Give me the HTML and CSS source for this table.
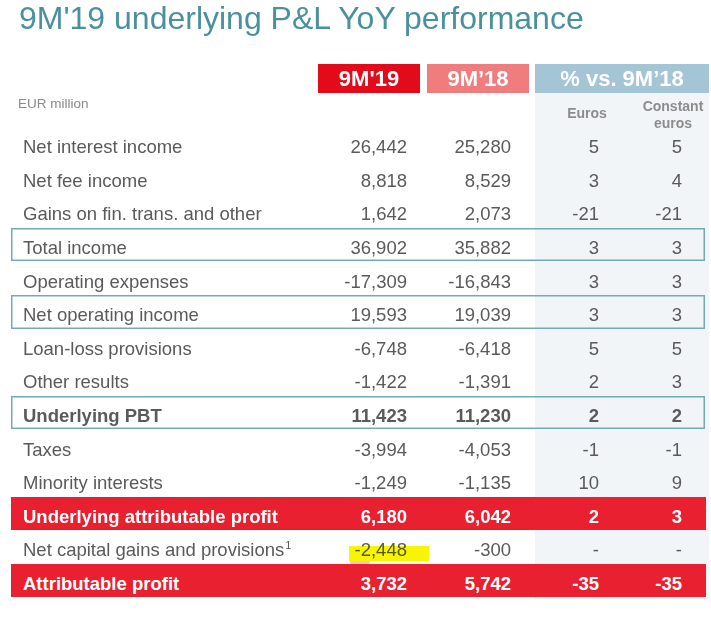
FILE: index.html
```html
<!DOCTYPE html>
<html lang="en">
<head>
<meta charset="utf-8">
<title>9M'19 underlying P&amp;L YoY performance</title>
<link rel="stylesheet" href="styles.css">
</head>
<body>
<div class="page">
  <h1 class="title">9M'19 underlying P&amp;L YoY performance</h1>
  <div class="table">
    <div class="head">
      <div class="hbox h19">9M'19</div>
      <div class="hbox h18">9M’18</div>
      <div class="hbox hpct">% vs. 9M’18</div>
    </div>
    <div class="body">
      <div class="sub">
        <div class="unit">EUR million</div>
        <div class="colh c3h">Euros</div>
        <div class="colh c4h">Constant<br>euros</div>
      </div>
      <div class="row"><div class="lbl">Net interest income</div><div class="n1">26,442</div><div class="n2">25,280</div><div class="n3">5</div><div class="n4">5</div></div>
      <div class="row"><div class="lbl">Net fee income</div><div class="n1">8,818</div><div class="n2">8,529</div><div class="n3">3</div><div class="n4">4</div></div>
      <div class="row"><div class="lbl">Gains on fin. trans. and other</div><div class="n1">1,642</div><div class="n2">2,073</div><div class="n3">-21</div><div class="n4">-21</div></div>
      <div class="row boxed"><div class="lbl">Total income</div><div class="n1">36,902</div><div class="n2">35,882</div><div class="n3">3</div><div class="n4">3</div></div>
      <div class="row"><div class="lbl">Operating expenses</div><div class="n1">-17,309</div><div class="n2">-16,843</div><div class="n3">3</div><div class="n4">3</div></div>
      <div class="row boxed"><div class="lbl">Net operating income</div><div class="n1">19,593</div><div class="n2">19,039</div><div class="n3">3</div><div class="n4">3</div></div>
      <div class="row"><div class="lbl">Loan-loss provisions</div><div class="n1">-6,748</div><div class="n2">-6,418</div><div class="n3">5</div><div class="n4">5</div></div>
      <div class="row"><div class="lbl">Other results</div><div class="n1">-1,422</div><div class="n2">-1,391</div><div class="n3">2</div><div class="n4">3</div></div>
      <div class="row boxed strong"><div class="lbl">Underlying PBT</div><div class="n1">11,423</div><div class="n2">11,230</div><div class="n3">2</div><div class="n4">2</div></div>
      <div class="row"><div class="lbl">Taxes</div><div class="n1">-3,994</div><div class="n2">-4,053</div><div class="n3">-1</div><div class="n4">-1</div></div>
      <div class="row"><div class="lbl">Minority interests</div><div class="n1">-1,249</div><div class="n2">-1,135</div><div class="n3">10</div><div class="n4">9</div></div>
      <div class="row red"><div class="lbl">Underlying attributable profit</div><div class="n1">6,180</div><div class="n2">6,042</div><div class="n3">2</div><div class="n4">3</div></div>
      <div class="row"><div class="lbl">Net capital gains and provisions<sup class="fn">1</sup></div><div class="n1">-2,448</div><div class="n2">-300</div><div class="n3">-</div><div class="n4">-</div><span class="hl"></span><span class="smudge"></span></div>
      <div class="row red"><div class="lbl">Attributable profit</div><div class="n1">3,732</div><div class="n2">5,742</div><div class="n3">-35</div><div class="n4">-35</div></div>
    </div>
  </div>
</div>
</body>
</html>
```

FILE: styles.css
```css
html, body {
  margin: 0;
  padding: 0;
  background: #ffffff;
}

.page {
  width: 711px;
  height: 617px;
  overflow: hidden;
  font-family: "Liberation Sans", Arial, sans-serif;
  color: #5a5a5a;
}

.title {
  margin: 0;
  padding-left: 19px;
  font-size: 32px;
  line-height: 36px;
  font-weight: normal;
  color: #4a919e;
  white-space: nowrap;
}

.table {
  margin-left: 11px;
  margin-top: 28px;
  width: 698px;
}

.head,
.sub,
.row {
  display: grid;
  grid-template-columns: 307px 102px 109px 88px 1fr;
}

.head {
  height: 29px;
}

.hbox {
  height: 29px;
  line-height: 29px;
  font-size: 22px;
  font-weight: bold;
  color: #ffffff;
  text-align: center;
  white-space: nowrap;
}

.h19 {
  grid-column: 2;
  background: #e30a1a;
}

.h18 {
  grid-column: 3;
  margin-left: 7px;
  background: #f07c7d;
}

.hpct {
  grid-column: 4 / span 2;
  margin-left: 6px;
  background: #a3c5d5;
}

.body {
  background: linear-gradient(90deg, transparent 524px, #f1f5f8 524px);
  padding-bottom: 2px;
}

.sub {
  height: 34px;
}

.unit {
  grid-column: 1;
  padding-left: 7px;
  padding-top: 3px;
  font-size: 13.5px;
  line-height: 16px;
  color: #8a8a8a;
}

.colh {
  font-size: 14px;
  font-weight: bold;
  line-height: 16.5px;
  color: #8c8c8c;
  text-align: center;
  white-space: nowrap;
}

.c3h {
  grid-column: 4;
  padding-left: 28px;
  padding-top: 12px;
}

.c4h {
  grid-column: 5;
  padding-left: 20px;
  padding-top: 5px;
}

.row {
  position: relative;
  height: 33.6px;
  box-sizing: border-box;
  padding-top: 7px;
  align-items: center;
  font-size: 18.5px;
  line-height: 20px;
  white-space: nowrap;
}

.lbl {
  grid-column: 1;
  padding-left: 12px;
}

.n1, .n2, .n3, .n4 {
  text-align: right;
  justify-self: start;
}

.n1 { grid-column: 2; width: 89px; }
.n2 { grid-column: 3; width: 91px; }
.n3 { grid-column: 4; width: 70px; }
.n4 { grid-column: 5; width: 65px; }

.boxed {
  margin-right: 4px;
  box-shadow: inset 0 0 0 1.5px #74a9b6;
}

.strong {
  font-weight: bold;
}

.red {
  margin-right: 3px;
  background: #e8202f;
  color: #ffffff;
  font-weight: bold;
}

.fn {
  font-size: 11px;
  line-height: 0;
  vertical-align: 7px;
  margin-left: 1px;
}

.hl {
  position: absolute;
  left: 338px;
  top: 16px;
  width: 80px;
  height: 15px;
  background: #f7f500;
  mix-blend-mode: multiply;
}

.smudge {
  position: absolute;
  left: 339px;
  top: 31px;
  width: 20px;
  height: 4px;
  border-radius: 0 0 50% 50%;
  background: rgba(220, 70, 70, 0.3);
}
```
